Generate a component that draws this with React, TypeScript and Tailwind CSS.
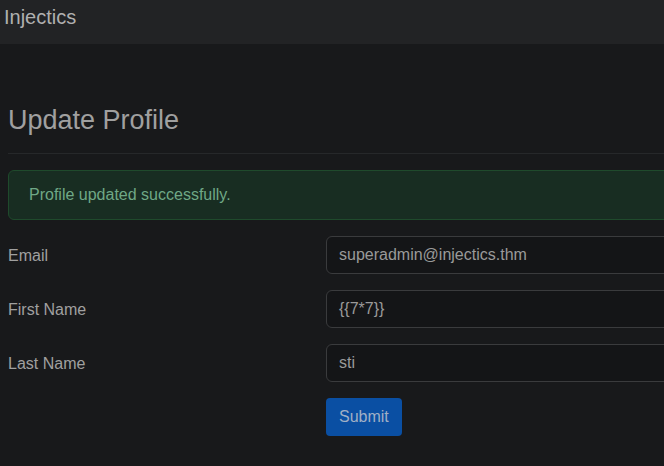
export default function App() {
    return (
        <div className="w-[664px] h-[466px] overflow-hidden bg-[#18191b] font-['Liberation_Sans',Arial,sans-serif] text-[#a6a6a6]">
            <nav className="h-[44px] bg-[#222325] flex items-start pt-[3px] pl-[4px]">
                <span className="text-[20px] leading-[28px] text-[#b0b0b0]">Injectics</span>
            </nav>
            <div className="w-[1000px] pl-[8px] pt-[60px]">
                <h2 className="text-[27px] leading-[32px] text-[#a0a0a0] pb-[17px] border-b border-[#26282a]">Update Profile</h2>
                <div className="mt-[16px] h-[50px] flex items-center px-[20px] bg-[#182d22] border border-[#1f4a2c] rounded-[6px] text-[16px] text-[#6fa886]">
                    Profile updated successfully.
                </div>
                <form className="mt-[16px] flex flex-col gap-[16px]">
                    <div className="flex items-center">
                        <label className="w-[318px] text-[16px] text-[#a0a0a0] pt-[1px]">Email</label>
                        <div className="flex-1 h-[38px] flex items-center px-[12px] bg-[#141517] border border-[#3a3b3d] rounded-[6px] text-[16px] text-[#9a9a9a]">superadmin@injectics.thm</div>
                    </div>
                    <div className="flex items-center">
                        <label className="w-[318px] text-[16px] text-[#a0a0a0] pt-[1px]">First Name</label>
                        <div className="flex-1 h-[38px] flex items-center px-[12px] bg-[#141517] border border-[#3a3b3d] rounded-[6px] text-[16px] text-[#9a9a9a]">{"{{7*7}}"}</div>
                    </div>
                    <div className="flex items-center">
                        <label className="w-[318px] text-[16px] text-[#a0a0a0] pt-[1px]">Last Name</label>
                        <div className="flex-1 h-[38px] flex items-center px-[12px] bg-[#141517] border border-[#3a3b3d] rounded-[6px] text-[16px] text-[#9a9a9a]">sti</div>
                    </div>
                    <div className="flex">
                        <div className="w-[318px]" />
                        <button type="button" className="h-[38px] px-[13px] bg-[#0a4fa3] rounded-[4px] text-[16px] text-[#a0b0c6]">Submit</button>
                    </div>
                </form>
            </div>
        </div>
    );
}
